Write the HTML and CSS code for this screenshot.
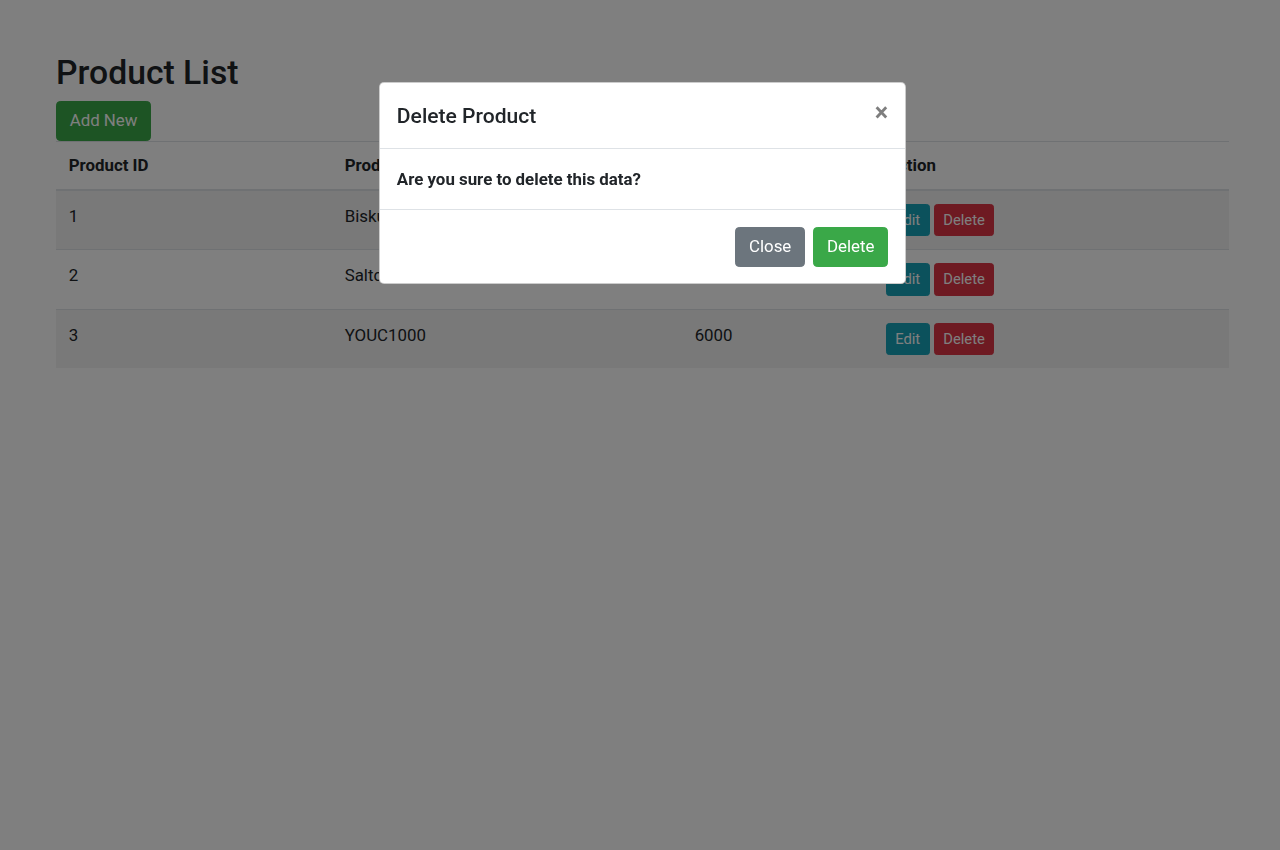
FILE: index.html
```html
<!DOCTYPE html>
<html lang="en">
<head>
<meta charset="utf-8">
<title>Product List</title>
<link rel="stylesheet" href="styles.css">
</head>
<body>
<div class="container">
  <h2 class="page-title">Product List</h2>
  <button class="btn btn-success">Add New</button>
  <table class="table">
    <colgroup>
      <col class="col-id">
      <col class="col-name">
      <col class="col-price">
      <col class="col-action">
    </colgroup>
    <thead>
      <tr>
        <th>Product ID</th>
        <th>Product Name</th>
        <th>Price</th>
        <th>Action</th>
      </tr>
    </thead>
    <tbody>
      <tr>
        <td>1</td>
        <td>Biskuit</td>
        <td>5000</td>
        <td><button class="btn btn-sm btn-info">Edit</button> <button class="btn btn-sm btn-danger">Delete</button></td>
      </tr>
      <tr>
        <td>2</td>
        <td>Saltcheese</td>
        <td>4000</td>
        <td><button class="btn btn-sm btn-info">Edit</button> <button class="btn btn-sm btn-danger">Delete</button></td>
      </tr>
      <tr>
        <td>3</td>
        <td>YOUC1000</td>
        <td>6000</td>
        <td><button class="btn btn-sm btn-info">Edit</button> <button class="btn btn-sm btn-danger">Delete</button></td>
      </tr>
    </tbody>
  </table>
</div>

<div class="modal-backdrop"></div>
<div class="modal">
  <div class="modal-dialog">
    <div class="modal-content">
      <div class="modal-header">
        <h5 class="modal-title">Delete Product</h5>
        <button class="close" aria-label="Close">&times;</button>
      </div>
      <div class="modal-body">
        <strong>Are you sure to delete this data?</strong>
      </div>
      <div class="modal-footer">
        <button class="btn btn-secondary">Close</button>
        <button class="btn btn-success">Delete</button>
      </div>
    </div>
  </div>
</div>
</body>
</html>
```

FILE: styles.css
```css
html {
  font-size: 16.86px;
}

* {
  box-sizing: border-box;
}

body {
  margin: 0;
  font-family: Roboto, "Liberation Sans", Arial, sans-serif;
  font-size: 1rem;
  line-height: 1.5;
  color: #212529;
  background: #fff;
}

.container {
  padding: 53px 51px 0 56px;
}

.page-title {
  margin: 0 0 7.4px;
  font-size: 2rem;
  font-weight: 500;
  line-height: 1.2;
}

.btn {
  display: inline-block;
  font-family: inherit;
  font-size: 1rem;
  font-weight: 400;
  line-height: 1.5;
  padding: 0.375rem 0.75rem;
  border: 1px solid transparent;
  border-radius: 0.25rem;
  color: #fff;
  vertical-align: middle;
  cursor: pointer;
}

.btn-sm {
  font-size: 0.875rem;
  padding: 0.25rem 0.5rem;
  border-radius: 0.2rem;
}

.btn-success {
  background: #3aa848;
  border-color: #3aa848;
}

.btn-secondary {
  background: #6c757d;
  border-color: #6c757d;
}

.btn-info {
  background: #17a2b8;
  border-color: #17a2b8;
}

.btn-danger {
  background: #dc3545;
  border-color: #dc3545;
}

.table {
  width: 100%;
  border-collapse: collapse;
  table-layout: fixed;
  margin-bottom: 1rem;
}

.col-id { width: 276px; }
.col-name { width: 350px; }
.col-price { width: 192px; }
.col-action { width: auto; }

.table th {
  text-align: left;
  font-weight: 700;
  padding: 10.8px 0.75rem;
  border-top: 1px solid #dee2e6;
  border-bottom: 2px solid #dee2e6;
  vertical-align: bottom;
}

.table td {
  padding: 13px 0.75rem;
  border-top: 1px solid #dee2e6;
  vertical-align: top;
}

.table td:last-child {
  padding-left: 0.7rem;
}

.table tbody tr:nth-of-type(odd) {
  background: rgba(0, 0, 0, 0.05);
}

.modal-backdrop {
  position: fixed;
  inset: 0;
  background: #000;
  opacity: 0.5;
}

.modal {
  position: fixed;
  inset: 0;
}

.modal-dialog {
  width: 527px;
  margin: 82px 0 0 379px;
}

.modal-content {
  background: #fff;
  border: 1px solid rgba(0, 0, 0, 0.2);
  border-radius: 0.3rem;
  display: flex;
  flex-direction: column;
}

.modal-header {
  display: flex;
  align-items: flex-start;
  justify-content: space-between;
  padding: 1rem;
  border-bottom: 1px solid #dee2e6;
}

.modal-title {
  margin: 0;
  font-size: 1.25rem;
  font-weight: 500;
  line-height: 1.5;
}

.close {
  padding: 1rem;
  margin: -1rem -1rem -1rem auto;
  background: transparent;
  border: 0;
  font-family: inherit;
  font-size: 1.5rem;
  font-weight: 700;
  line-height: 1;
  color: #000;
  text-shadow: 0 1px 0 #fff;
  opacity: 0.5;
  cursor: pointer;
}

.modal-body {
  padding: 1.05rem 1rem 1rem;
}

.modal-footer {
  display: flex;
  align-items: center;
  justify-content: flex-end;
  padding: 0.75rem 0.75rem 0.7rem;
  border-top: 1px solid #dee2e6;
}

.modal-footer .btn {
  margin: 0.25rem;
}
```
